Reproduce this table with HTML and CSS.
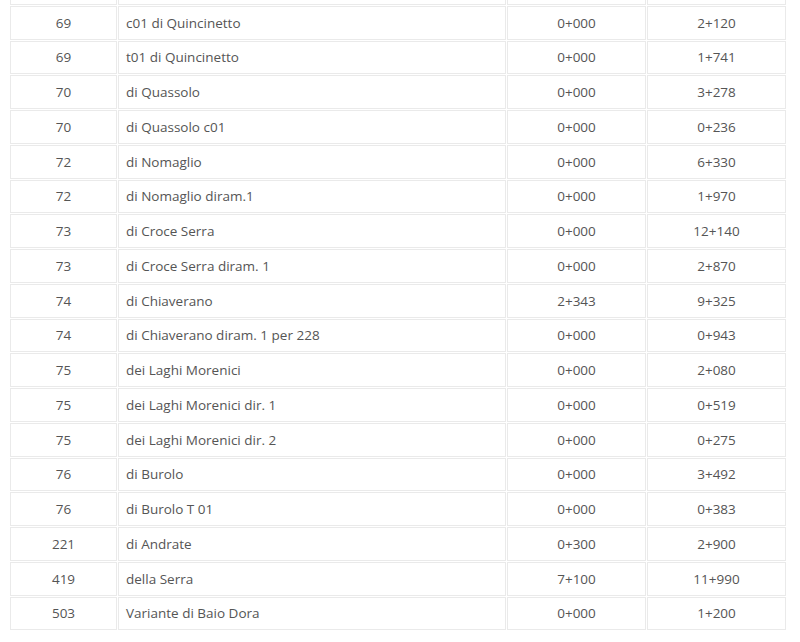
FILE: index.html
```html
<!DOCTYPE html>
<html lang="it">
<head>
<meta charset="utf-8">
<title>Strade provinciali</title>
<link rel="stylesheet" href="styles.css">
</head>
<body>
<div class="wrap">
<table class="roads">
<colgroup><col class="c-num"><col class="c-name"><col class="c-km"><col class="c-km"></colgroup>
<tbody>
<tr class="clip"><td></td><td></td><td></td><td></td></tr>
<tr><td class="num">69</td><td class="name">c01 di Quincinetto</td><td class="km">0+000</td><td class="km">2+120</td></tr>
<tr><td class="num">69</td><td class="name">t01 di Quincinetto</td><td class="km">0+000</td><td class="km">1+741</td></tr>
<tr><td class="num">70</td><td class="name">di Quassolo</td><td class="km">0+000</td><td class="km">3+278</td></tr>
<tr><td class="num">70</td><td class="name">di Quassolo c01</td><td class="km">0+000</td><td class="km">0+236</td></tr>
<tr><td class="num">72</td><td class="name">di Nomaglio</td><td class="km">0+000</td><td class="km">6+330</td></tr>
<tr><td class="num">72</td><td class="name">di Nomaglio diram.1</td><td class="km">0+000</td><td class="km">1+970</td></tr>
<tr><td class="num">73</td><td class="name">di Croce Serra</td><td class="km">0+000</td><td class="km">12+140</td></tr>
<tr><td class="num">73</td><td class="name">di Croce Serra diram. 1</td><td class="km">0+000</td><td class="km">2+870</td></tr>
<tr><td class="num">74</td><td class="name">di Chiaverano</td><td class="km">2+343</td><td class="km">9+325</td></tr>
<tr><td class="num">74</td><td class="name">di Chiaverano diram. 1 per 228</td><td class="km">0+000</td><td class="km">0+943</td></tr>
<tr><td class="num">75</td><td class="name">dei Laghi Morenici</td><td class="km">0+000</td><td class="km">2+080</td></tr>
<tr><td class="num">75</td><td class="name">dei Laghi Morenici dir. 1</td><td class="km">0+000</td><td class="km">0+519</td></tr>
<tr><td class="num">75</td><td class="name">dei Laghi Morenici dir. 2</td><td class="km">0+000</td><td class="km">0+275</td></tr>
<tr><td class="num">76</td><td class="name">di Burolo</td><td class="km">0+000</td><td class="km">3+492</td></tr>
<tr><td class="num">76</td><td class="name">di Burolo T 01</td><td class="km">0+000</td><td class="km">0+383</td></tr>
<tr><td class="num">221</td><td class="name">di Andrate</td><td class="km">0+300</td><td class="km">2+900</td></tr>
<tr><td class="num">419</td><td class="name">della Serra</td><td class="km">7+100</td><td class="km">11+990</td></tr>
<tr><td class="num">503</td><td class="name">Variante di Baio Dora</td><td class="km">0+000</td><td class="km">1+200</td></tr>
</tbody>
</table>
</div>
</body>
</html>
```

FILE: styles.css
```css
html, body {
  margin: 0;
  padding: 0;
  background: #ffffff;
}
.wrap {
  width: 800px;
  height: 642px;
  overflow: hidden;
  padding-left: 9px;
  box-sizing: border-box;
}
.roads {
  border-collapse: separate;
  border-spacing: 1px;
  width: 776px;
  margin-top: -30px;
  font-family: "Open Sans", "DejaVu Sans", sans-serif;
  font-size: 13.5px;
  color: #555555;
  table-layout: fixed;
}
.c-num { width: 107px; }
.c-name { width: 388px; }
.c-km { width: 139px; }
.roads td {
  border: 1px solid #eaeaea;
  height: 33.75px;
  padding: 0 7px;
  box-sizing: border-box;
  line-height: 18px;
  vertical-align: middle;
}
.roads .num, .roads .km { text-align: center; }
.roads .name { text-align: left; }
```
